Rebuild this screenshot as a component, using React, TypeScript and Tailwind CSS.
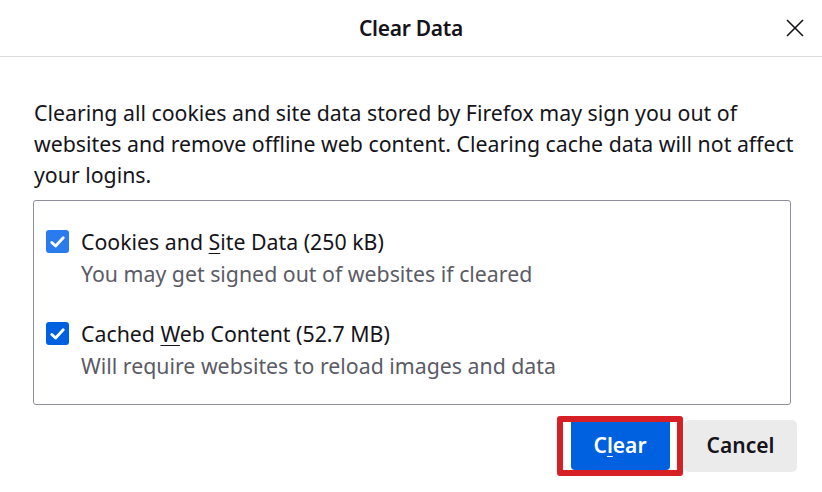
import React from "react";

// Checkbox square with a white tick
const CheckBox: React.FC<{ hovered?: boolean }> = ({ hovered }) => (
  <div
    className={`w-[23px] h-[23px] rounded-[3px] flex items-center justify-center shrink-0 mt-[4px] ${
      hovered ? "bg-[#2a7af0]" : "bg-[#0061e0]"
    }`}
  >
    <svg width="15" height="12" viewBox="0 0 15 12" fill="none">
      <path
        d="M1.8 6.4 L5.6 10 L13.2 1.8"
        stroke="white"
        strokeWidth="2.8"
        strokeLinecap="round"
        strokeLinejoin="round"
      />
    </svg>
  </div>
);

interface OptionProps {
  before: string;
  key_: string;
  after: string;
  note: string;
  hovered?: boolean;
}

const Option: React.FC<OptionProps> = ({ before, key_, after, note, hovered }) => (
  <div className="flex gap-[12px]">
    <CheckBox hovered={hovered} />
    <div className="flex flex-col">
      <span className="text-[21.3px] leading-[32px] text-[#15141a]">
        {before}
        <span className="underline underline-offset-[3px] decoration-[1px]">{key_}</span>
        {after}
      </span>
      <span className="text-[21.3px] leading-[32px] text-[#5b5b66]">{note}</span>
    </div>
  </div>
);

const App: React.FC = () => {
  return (
    <div className="w-[822px] h-[492px] bg-white overflow-hidden font-['Noto_Sans',sans-serif]">
      {/* Header */}
      <div className="h-[57px] border-b border-[#dcdcdc] grid grid-cols-[1fr_auto_1fr] items-center">
        <div />
        <div className="text-[21px] font-semibold text-[#15141a] tracking-[-0.3px] pt-[2px]">Clear Data</div>
        <div className="flex justify-end pr-[18px]">
          <svg width="18" height="18" viewBox="0 0 18 18">
            <path d="M1 1 L17 17 M17 1 L1 17" stroke="#15141a" strokeWidth="1.6" />
          </svg>
        </div>
      </div>

      {/* Body */}
      <div className="pt-[40px] px-[33px]">
        <p className="text-[21.3px] leading-[31px] text-[#15141a] pl-[1px] w-[770px]">
          Clearing all cookies and site data stored by Firefox may sign you out of websites and
          remove offline web content. Clearing cache data will not affect your logins.
        </p>

        <div className="mt-[10px] w-[758px] h-[205px] border border-[#8f8f9d] rounded-[3px] pt-[25px] pl-[12px] flex flex-col gap-[28px]">
          <Option
            before="Cookies and "
            key_="S"
            after="ite Data (250 kB)"
            note="You may get signed out of websites if cleared"
            hovered
          />
          <Option
            before="Cached "
            key_="W"
            after="eb Content (52.7 MB)"
            note="Will require websites to reload images and data"
          />
        </div>

        {/* Buttons */}
        <div className="flex justify-end items-center mt-[11px] mr-[-8px]">
          <div className="w-[126px] h-[60px] border-[6px] border-[#d71f26] rounded-[3px] bg-white flex justify-center">
            <button className="w-[99px] h-full bg-[#0061e0] rounded-b-[4px] text-white text-[21px] font-semibold">
              C<span className="underline underline-offset-[3px] decoration-[1px]">l</span>ear
            </button>
          </div>
          <button className="ml-[1px] w-[113px] h-[52px] bg-[#ebebeb] rounded-[5px] text-[#15141a] text-[21px] font-semibold">
            Cancel
          </button>
        </div>
      </div>
    </div>
  );
};

export default App;
